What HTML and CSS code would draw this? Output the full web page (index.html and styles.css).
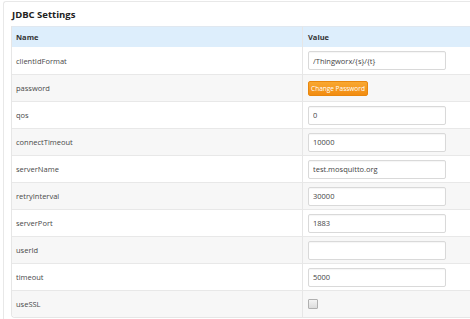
FILE: index.html
```html
<!DOCTYPE html>
<html>
<head>
<meta charset="utf-8">
<link rel="stylesheet" href="styles.css">
</head>
<body>
<div class="panel">
  <div class="title">JDBC Settings</div>
  <table class="grid">
    <thead>
      <tr><th class="c-name">Name</th><th class="c-val">Value</th></tr>
    </thead>
    <tbody>
      <tr><td class="c-name">clientIdFormat</td><td class="c-val"><input class="field" type="text" value="/Thingworx/{s}/{t}"></td></tr>
      <tr><td class="c-name">password</td><td class="c-val"><button class="btn">Change Password</button></td></tr>
      <tr><td class="c-name">qos</td><td class="c-val"><input class="field" type="text" value="0"></td></tr>
      <tr><td class="c-name">connectTimeout</td><td class="c-val"><input class="field" type="text" value="10000"></td></tr>
      <tr><td class="c-name">serverName</td><td class="c-val"><input class="field" type="text" value="test.mosquitto.org"></td></tr>
      <tr><td class="c-name">retryInterval</td><td class="c-val"><input class="field" type="text" value="30000"></td></tr>
      <tr><td class="c-name">serverPort</td><td class="c-val"><input class="field" type="text" value="1883"></td></tr>
      <tr><td class="c-name">userId</td><td class="c-val"><input class="field" type="text" value=""></td></tr>
      <tr><td class="c-name">timeout</td><td class="c-val"><input class="field" type="text" value="5000"></td></tr>
      <tr><td class="c-name">useSSL</td><td class="c-val"><span class="check"></span></td></tr>
    </tbody>
  </table>
</div>
</body>
</html>
```
FILE: styles.css
```css
html, body {
  margin: 0;
  padding: 0;
  background: #ffffff;
  overflow: hidden;
  width: 470px;
  height: 319px;
}
body {
  font-family: "Open Sans", "Noto Sans", sans-serif;
  color: #333333;
}
.panel {
  margin: 1px 0 0 3px;
  width: 467px;
  height: 318px;
  border: 1px solid #e8e8e8;
  border-right: none;
  border-bottom: none;
  border-top-left-radius: 3px;
  padding: 0 0 0 7px;
  box-sizing: border-box;
}
.title {
  height: 24px;
  line-height: 26px;
  font-size: 9.5px;
  font-weight: bold;
  color: #222222;
  padding-left: 1px;
}
.grid {
  border-collapse: separate;
  border-spacing: 0;
  width: 459px;
  table-layout: fixed;
  border-left: 1px solid #e6e6e6;
  border-bottom: 1px solid #e6e6e6;
  border-bottom-left-radius: 4px;
}
.grid th {
  background: #ddeefc;
  height: 21px;
  padding: 0;
  text-align: left;
  font-size: 7.5px;
  font-weight: bold;
  color: #333333;
  border-top: 1px solid #e0e8f0;
  box-sizing: border-box;
}
.grid td {
  height: 27px;
  padding: 0;
  font-size: 7.5px;
  color: #484848;
  border-top: 1px solid #e8e8e8;
  box-sizing: border-box;
}
.grid tbody tr:nth-child(even) td {
  background: #f7f7f7;
}
.grid tbody tr:first-child td {
  border-top: none;
}
.grid tbody tr:last-child td:first-child {
  border-bottom-left-radius: 4px;
}
.c-name {
  width: 291px;
  padding-left: 4px !important;
  border-right: 1px solid #e6e6e6;
}
.c-val {
  padding-left: 5px !important;
}
.field {
  display: block;
  width: 138px;
  height: 19px;
  box-sizing: border-box;
  border: 1px solid #d9d9d9;
  border-radius: 2px;
  background: #ffffff;
  font-family: "Open Sans", "Noto Sans", sans-serif;
  font-size: 7.5px;
  color: #444444;
  padding: 0 0 0 4px;
  margin: 0;
  box-shadow: inset 0 1px 1px rgba(0,0,0,0.04);
}
.btn {
  display: block;
  width: 60px;
  height: 15px;
  margin: 0;
  padding: 0;
  border: 1px solid #e8870e;
  border-radius: 2px;
  background: linear-gradient(#f9a832, #f28c10);
  color: #ffffff;
  font-family: "Open Sans", "Noto Sans", sans-serif;
  font-size: 6.5px;
  line-height: 13px;
  text-align: center;
  white-space: nowrap;
}
.check {
  display: block;
  width: 8px;
  height: 8px;
  border: 1px solid #b0b0b0;
  border-radius: 1px;
  background: linear-gradient(#f4f4f4, #dcdcdc);
}
```
